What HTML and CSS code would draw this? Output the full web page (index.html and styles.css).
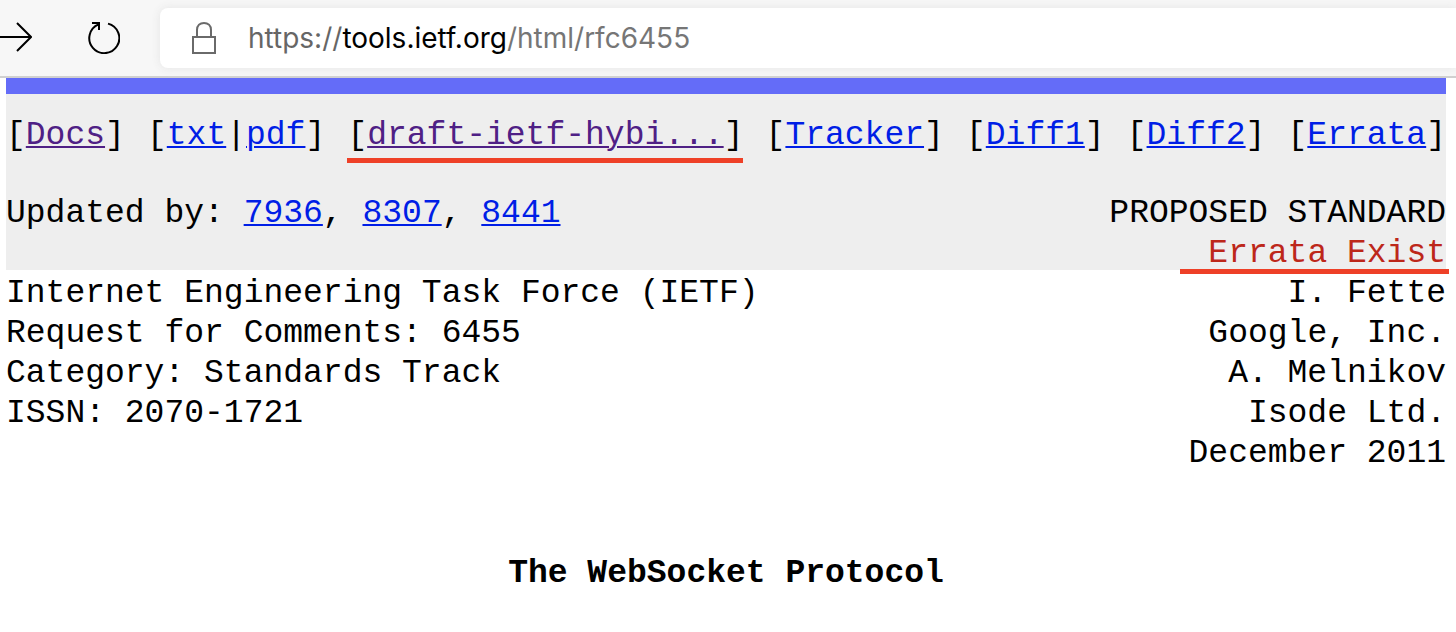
FILE: index.html
```html
<!DOCTYPE html>
<html lang="en">
<head>
<meta charset="utf-8">
<title>RFC 6455 - The WebSocket Protocol</title>
<link rel="stylesheet" href="styles.css">
</head>
<body>
<div class="toolbar">
  <div class="controls">
    <button class="tool forward" type="button" aria-label="Forward">
      <svg width="32" height="32" viewBox="0 0 32 32" fill="none" stroke="#000" stroke-width="2"><path d="M0 15H31M17 1L31 15L17 29"/></svg>
    </button>
    <button class="tool" type="button" aria-label="Reload">
      <svg width="32" height="32" viewBox="0 0 32 32" fill="none" stroke="#000" stroke-width="2"><path d="M20 1.600A15 15 0 1 1 10.500 2.300M4 1H11V8"/></svg>
    </button>
  </div>
  <div class="address">
    <svg class="lock" width="24" height="32" viewBox="0 0 24 32" fill="none" stroke="#6a6a6a" stroke-width="2"><path d="M1 15H23V31H1ZM5 15V8C5 3.500 8 1 12 1S19 3.500 19 8V15"/></svg>
    <div class="url" role="textbox" aria-label="Address" contenteditable="true" spellcheck="false"><span class="scheme">https://</span><span class="host">tools.ietf.org</span><span class="path">/html/rfc6455</span></div>
  </div>
</div>
<main class="page">
  <header class="docinfo">
    <nav class="links">
      <span>[<a class="visited" href="#docs">Docs</a>]</span>
      <span>[<a href="#txt">txt</a>|<a href="#pdf">pdf</a>]</span>
      <span class="marked">[<a class="visited" href="#draft">draft-ietf-hybi...</a>]</span>
      <span>[<a href="#tracker">Tracker</a>]</span>
      <span>[<a href="#diff1">Diff1</a>]</span>
      <span>[<a href="#diff2">Diff2</a>]</span>
      <span>[<a href="#errata">Errata</a>]</span>
    </nav>
    <div class="row">
      <div>Updated by: <a href="#7936">7936</a>, <a href="#8307">8307</a>, <a href="#8441">8441</a></div>
      <div class="right">PROPOSED STANDARD<br><span class="errata marked">Errata Exist</span></div>
    </div>
  </header>
  <section class="row heading">
    <div>Internet Engineering Task Force (IETF)<br>Request for Comments: 6455<br>Category: Standards Track<br>ISSN: 2070-1721</div>
    <div class="right">I. Fette<br>Google, Inc.<br>A. Melnikov<br>Isode Ltd.<br>December 2011</div>
  </section>
  <h1 class="title">The WebSocket Protocol</h1>
</main>
</body>
</html>
```
FILE: styles.css
```css
* { box-sizing: border-box; }
body { margin: 0; background: #fff; color: #000; }
.toolbar {
  display: flex;
  align-items: center;
  height: 78px;
  border-bottom: 2px solid #d0d0d0;
  background: #f7f7f7;
}
.controls { display: flex; gap: 56px; width: 160px; }
.tool { display: flex; padding: 0; border: 0; background: none; }
.address {
  display: flex;
  flex: 1;
  align-items: center;
  gap: 32px;
  height: 60px;
  padding-left: 32px;
  border-radius: 8px 0 0 8px;
  background: #fff;
  box-shadow: 0 0 10px #e4e4e4;
}
.url { flex: 1; outline: 0; font: 28px/40px Inter, sans-serif; white-space: nowrap; }
.scheme { color: #666; }
.host { color: #000; }
.path { color: #767676; }
.page {
  margin: 0 10px 0 6px;
  font: 33px/40px "Liberation Mono", monospace;
}
.docinfo {
  height: 192px;
  padding-top: 22px;
  border-top: 16px solid #646cf8;
  background: #eee;
}
.links, .row { display: flex; justify-content: space-between; }
.links { margin-bottom: 38px; }
.right { text-align: right; }
.heading { padding-top: 4px; }
a { color: #001ee6; text-decoration-thickness: 2px; text-underline-offset: 2px; }
.visited { color: #4f2085; }
.errata { color: #bd271a; }
.marked { position: relative; }
.marked::after {
  content: "";
  position: absolute;
  right: 0;
  bottom: -7px;
  left: 0;
  height: 5px;
  background: #ee4027;
}
.errata::after { right: -3px; bottom: -2px; left: -28px; }
.title { margin: 80px 0 0; font-size: 33px; line-height: 40px; text-align: center; }
```
